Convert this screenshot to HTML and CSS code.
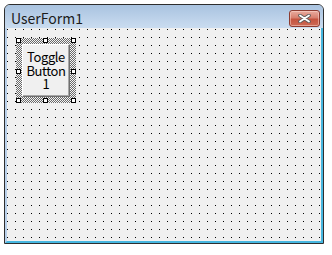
FILE: index.html
```html
<!DOCTYPE html>
<html>
<head>
  <link rel="stylesheet" href="styles.css">
</head>
<body>
  <div class="window">
    <div class="titlebar">
      <span class="title">UserForm1</span>
      <div class="close">
        <svg width="13" height="9" viewBox="0 0 13 9">
          <path d="M2 1.5 L11 7.5 M11 1.5 L2 7.5" stroke="#5a5a5a" stroke-width="3.6" stroke-linecap="round"/>
          <path d="M2 1.5 L11 7.5 M11 1.5 L2 7.5" stroke="#ffffff" stroke-width="1.8" stroke-linecap="round"/>
        </svg>
      </div>
    </div>
    <div class="client">
      <div class="selection">
        <div class="toggle">
          <span class="line">Toggle</span>
          <span class="line">Button</span>
          <span class="line">1</span>
        </div>
        <span class="handle tl"></span>
        <span class="handle tm"></span>
        <span class="handle tr"></span>
        <span class="handle ml"></span>
        <span class="handle mr"></span>
        <span class="handle bl"></span>
        <span class="handle bm"></span>
        <span class="handle br"></span>
      </div>
    </div>
  </div>
</body>
</html>
```

FILE: styles.css
```css
body {
  margin: 0;
  background: #ffffff;
  font-family: "Noto Sans CJK JP", "Noto Sans", sans-serif;
}

.window {
  margin: 4px 0 0 4px;
  width: 320px;
  height: 240px;
  box-sizing: border-box;
  border: 1px solid #2e2e2e;
  border-radius: 6px 6px 0 0;
  background: #c3d7ec;
  display: flex;
  flex-direction: column;
  overflow: hidden;
}

.titlebar {
  flex: none;
  height: 23px;
  display: flex;
  align-items: center;
  justify-content: space-between;
  padding: 0 3px 0 6px;
  background: linear-gradient(#a9c3e0, #cadcf0);
}

.title {
  font-size: 14px;
  color: #1c1c1c;
  line-height: 16px;
  margin-top: 2px;
}

.close {
  width: 31px;
  height: 17px;
  box-sizing: border-box;
  margin-top: 3px;
  border: 1px solid #8c3b30;
  border-radius: 3px;
  background: linear-gradient(#e9ac9f 0%, #d8806f 45%, #c5533e 55%, #cd6a55 100%);
  box-shadow: inset 0 0 0 1px rgba(255, 220, 210, 0.5);
  display: flex;
  align-items: center;
  justify-content: center;
}

.client {
  flex: 1;
  position: relative;
  border-left: 2px solid #b9d0ea;
  border-right: 2px solid #46b7e0;
  border-bottom: 2px solid #46b7e0;
  background-color: #f0f0f0;
  background-image: url("data:image/svg+xml,%3Csvg xmlns='http://www.w3.org/2000/svg' width='8' height='8' viewBox='0 0 8 8'%3E%3Crect x='0' y='1' width='1' height='1' fill='%23000'/%3E%3C/svg%3E");
  background-size: 8px 8px;
  background-position: 0 0;
}

.selection {
  position: absolute;
  left: 9px;
  top: 10px;
  width: 60px;
  height: 65px;
  box-sizing: border-box;
  padding: 6px;
  background: repeating-conic-gradient(#6a6a6a 0 25%, #f4f4f4 0 50%) 0 0 / 2px 2px;
}

.toggle {
  height: 100%;
  box-sizing: border-box;
  background: #f0f0f0;
  border: 1px solid;
  border-color: #ffffff #6e6e6e #6e6e6e #ffffff;
  box-shadow: inset -1px -1px 0 #a8a8a8;
  display: flex;
  flex-direction: column;
  align-items: center;
  justify-content: center;
  font-size: 13px;
  letter-spacing: -0.4px;
  color: #000;
}

.line {
  display: block;
  height: 13.5px;
  line-height: 13.5px;
}

.handle {
  position: absolute;
  width: 5px;
  height: 5px;
  box-sizing: border-box;
  border: 1px solid #000;
  background: #fff;
}

.tl { left: 0; top: 0; }
.tm { left: 27px; top: 0; }
.tr { right: 0; top: 0; }
.ml { left: 0; top: 31px; }
.mr { right: 0; top: 31px; }
.bl { left: 0; bottom: 0; }
.bm { left: 27px; bottom: 0; }
.br { right: 0; bottom: 0; }
```
